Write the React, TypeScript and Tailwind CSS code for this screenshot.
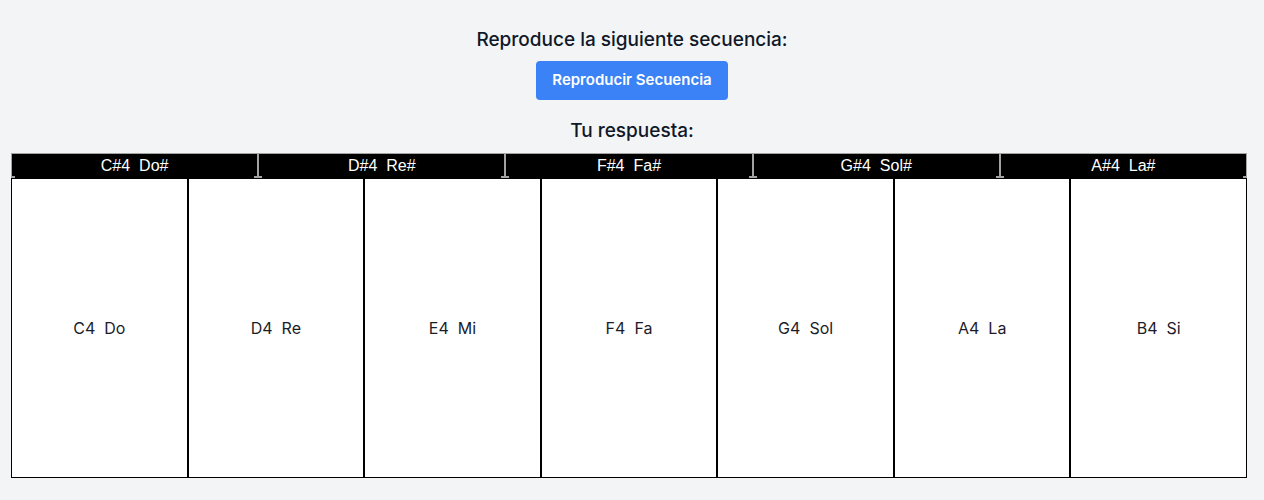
const blackKeys = [
  ['C#4', 'Do#'],
  ['D#4', 'Re#'],
  ['F#4', 'Fa#'],
  ['G#4', 'Sol#'],
  ['A#4', 'La#'],
];

const whiteKeys = [
  ['C4', 'Do'],
  ['D4', 'Re'],
  ['E4', 'Mi'],
  ['F4', 'Fa'],
  ['G4', 'Sol'],
  ['A4', 'La'],
  ['B4', 'Si'],
];

export default function App() {
  return (
    <div className="min-h-[500px] bg-[#f3f4f6] pt-[26px] font-['Inter',sans-serif] text-gray-900">
      <div className="flex flex-col items-center">
        <h2 className="text-[19px] font-medium leading-7">Reproduce la siguiente secuencia:</h2>
        <button className="mt-[7px] h-[39px] rounded bg-[#3b82f6] px-4 text-[15px] font-semibold text-white">
          Reproducir Secuencia
        </button>
        <h2 className="mt-[17px] text-[19px] font-medium leading-7">Tu respuesta:</h2>
      </div>

      <div className="ml-[11px] mt-[8px] w-[1236px]">
        <div className="flex h-[25px]">
          {blackKeys.map(([note, name]) => (
            <div
              key={note}
              className="relative flex flex-1 items-center justify-center gap-[9px] border border-b-0 border-[#a3a3a3] bg-black font-['Liberation_Sans',sans-serif] text-base text-white"
            >
              <span>{note}</span>
              <span>{name}</span>
              <span className="absolute -left-px bottom-0 h-[2px] w-[4px] bg-[#a3a3a3]" />
              <span className="absolute -right-px bottom-0 h-[2px] w-[4px] bg-[#a3a3a3]" />
            </div>
          ))}
        </div>
        <div className="flex h-[300px]">
          {whiteKeys.map(([note, name]) => (
            <div
              key={note}
              className="flex flex-1 items-center justify-center gap-[9px] border border-black bg-white text-base text-[#1c1c2a]"
            >
              <span>{note}</span>
              <span>{name}</span>
            </div>
          ))}
        </div>
      </div>
    </div>
  );
}
